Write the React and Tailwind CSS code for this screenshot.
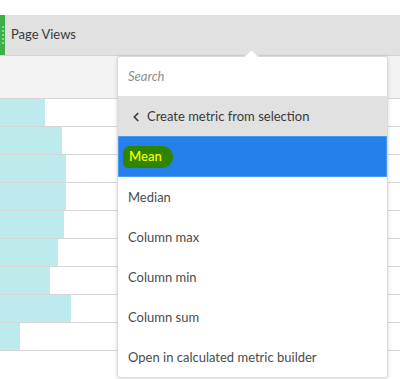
import React from 'react';
import { ChevronLeft } from 'lucide-react';

const bars = [45, 62, 66, 66, 64, 58, 50, 71, 20];

const items = ['Median', 'Column max', 'Column min', 'Column sum', 'Open in calculated metric builder'];

const App = () => {
  return (
    <div className="relative w-[400px] h-[379px] bg-white overflow-hidden text-[#4b4b4b]" style={{ fontFamily: 'Lato, "Open Sans", sans-serif' }}>
      <div className="h-[15px]" />
      <div className="h-[41px] bg-[#e1e1e1] border-b border-[#d3d3d3] flex items-center">
        <div className="w-[5px] h-full bg-[#3db04b] flex flex-col items-center justify-center gap-[2px]">
          {[0, 1, 2, 3, 4].map((i) => (
            <div key={i} className="w-[2px] h-[2px] rounded-full bg-[#a9dfae]" />
          ))}
        </div>
        <span className="ml-[6px] text-[13px] text-[#3a3a3a]">Page Views</span>
      </div>
      <div className="h-[43px] bg-[#f3f3f3] border-b border-[#d6d6d6]" />
      <div className="flex flex-col">
        {bars.map((w, i) => (
          <div key={i} className="h-[28px] border-b border-[#d6d6d6] flex">
            <div className="h-full bg-[#bdebed]" style={{ width: w }} />
          </div>
        ))}
      </div>

      <div className="absolute left-[117px] top-[56px] w-[271px] bg-white rounded-[3px] border border-[#dadada] shadow-[0_1px_4px_rgba(0,0,0,0.15)]">
        <div className="absolute -top-[6px] left-[128px] w-[11px] h-[11px] bg-white rotate-45 border-l border-t border-[#dadada]" />
        <div className="relative h-[39px] flex items-center px-[10px] text-[13px] italic text-[#8e8e8e]">Search</div>
        <div className="h-[40px] bg-[#e1e1e1] flex items-center pl-[11px] pt-[1px] text-[13px] text-[#3a3a3a]">
          <ChevronLeft size={14} strokeWidth={3} className="mr-[4px]" />
          Create metric from selection
        </div>
        <div className="h-[41px] bg-[#2680eb] border border-[#4a9af0] flex items-center px-[4px] pt-[1px]">
          <span className="bg-[#2e8500] text-[#f7f700] text-[13px] font-semibold pl-[6px] pr-[11px] py-[1px] rounded-[8px_12px_12px_6px]">Mean</span>
        </div>
        {items.map((t) => (
          <div key={t} className="h-[40px] flex items-center px-[10px] pt-[2px] text-[13px]">{t}</div>
        ))}
      </div>
    </div>
  );
};

export default App;
